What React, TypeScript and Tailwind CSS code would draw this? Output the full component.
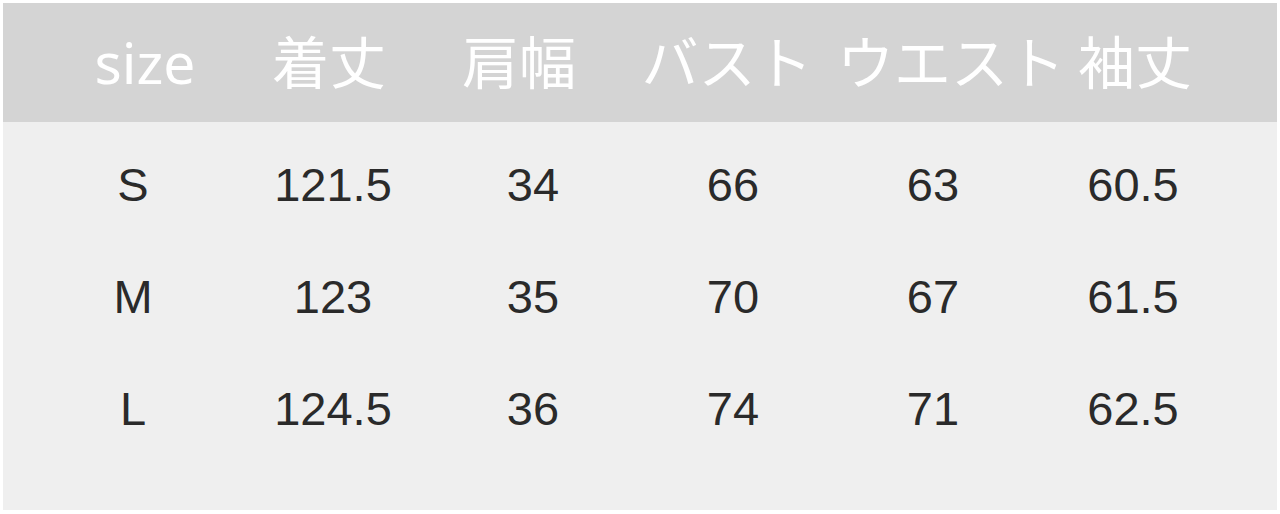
const heads = [
  { label: "size", w: "w-[184px]" },
  { label: "着丈", w: "w-[184px]" },
  { label: "肩幅", w: "w-[196px]" },
  { label: "バスト", w: "w-[220px]" },
  { label: "ウエスト", w: "w-[216px]" },
  { label: "袖丈", w: "w-[164px]" },
];

const rows = [
  ["S", "121.5", "34", "66", "63", "60.5"],
  ["M", "123", "35", "70", "67", "61.5"],
  ["L", "124.5", "36", "74", "71", "62.5"],
];

export default function App() {
  return (
    <div className="w-[1280px] h-[514px] bg-white pt-[3px] pl-[3px] pr-[3px] pb-[4px] flex flex-col">
      <div
        className="h-[119px] bg-[#d4d4d4] flex items-center pl-[50px] text-white text-[57px]"
        style={{ fontFamily: '"Noto Sans", "Noto Sans CJK JP", sans-serif' }}
      >
        {heads.map((h) => (
          <div key={h.label} className={`${h.w} text-center whitespace-nowrap`}>
            {h.label}
          </div>
        ))}
      </div>
      <div
        className="flex-1 bg-[#efefef] pt-[7px] pl-[30px] text-[#2a2a2a] text-[47px]"
        style={{ fontFamily: '"Liberation Sans", Arial, sans-serif' }}
      >
        {rows.map((r) => (
          <div key={r[0]} className="h-[112px] grid grid-cols-[repeat(6,200px)] items-center">
            {r.map((c, i) => (
              <div key={i} className="text-center">{c}</div>
            ))}
          </div>
        ))}
      </div>
    </div>
  );
}
